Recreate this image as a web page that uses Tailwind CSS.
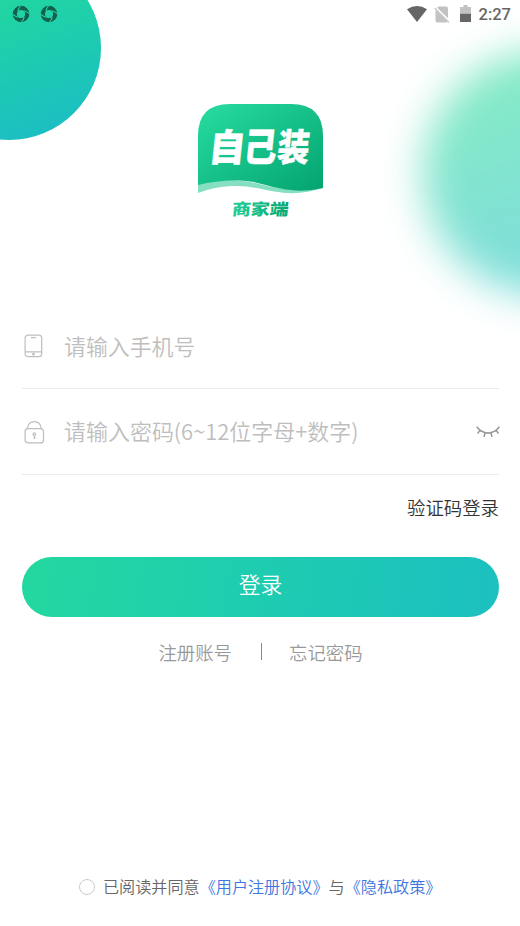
<!DOCTYPE html>
<html lang="zh-CN">
<head>
<meta charset="utf-8">
<meta name="viewport" content="width=device-width, initial-scale=1">
<title>登录</title>
<script src="https://cdn.jsdelivr.net/npm/@tailwindcss/browser@4"></script>
</head>
<body class="bg-white">
<main class="relative flex h-[926px] w-[520px] flex-col overflow-hidden bg-white font-['Noto_Sans_CJK_SC',sans-serif] font-[350]">
  <!-- decorative circles -->
  <div class="absolute -left-[83px] -top-[44px] size-[184px] rounded-full bg-linear-160 from-[#24dc96] from-15% to-[#1cbfc1] to-88%"></div>
  <div class="absolute left-[423px] top-[51px] size-[244px] rounded-full bg-linear-160 from-[#85ebc4] from-10% to-[#7eddda] to-80% blur-[20px]"></div>

  <header class="relative flex h-7 items-center pl-3 pr-[9px]">
    <div class="flex gap-[10px]">
      <svg class="size-[18px]" viewBox="0 0 18 18"><g id="swirl" fill="none"><circle cx="9" cy="9" r="6.200" stroke="#13604c" stroke-width="4.200"/><g stroke="#24d4a2" stroke-width="1.100"><path id="gap" d="M5.800 6.200Q6.500 3 8.800 .500"/><use href="#gap" transform="rotate(90 9 9)"/><use href="#gap" transform="rotate(180 9 9)"/><use href="#gap" transform="rotate(270 9 9)"/></g></g></svg>
      <svg class="size-[18px]" viewBox="0 0 18 18"><use href="#swirl"/></svg>
    </div>
    <div class="ml-auto flex items-center">
      <svg class="h-4 w-5" viewBox="0 0 20 16"><path fill="#666" d="M0 3.2Q10-3.1 20 3.2L10 16Z"/></svg>
      <svg class="ml-[7px] h-[17px] w-4" viewBox="0 0 16 17"><path fill="#c2c2c2" d="M4.500.500H12Q14 .500 14 2.500V12.200L3.100 1.700ZM1.500 3.700 13.200 15.600Q12.800 16.500 12 16.500H3.500Q1.500 16.500 1.500 14.500Z"/><path stroke="#c2c2c2" stroke-width="1.300" d="m.6 1.900 14.200 14.600"/></svg>
      <svg class="-mt-px ml-[10px] h-[17px] w-[11px]" viewBox="0 0 11 17"><path fill="#c2c2c2" d="M3.500 0h4v2H11v7H0V2h3.500Z"/><path fill="#666" d="M0 8.800h11V17H0Z"/></svg>
      <span class="ml-2 mt-0.5 font-[Roboto,sans-serif] text-[16.5px] font-medium leading-none text-[#666]">2:27</span>
    </div>
  </header>

  <!-- brand -->
  <div class="relative mx-auto mt-[76px] h-[116px] w-[125px]">
    <svg class="block h-full w-full overflow-visible" viewBox="0 0 125 116">
      <defs>
        <linearGradient id="tile" x1="0" y1="0" x2="1" y2="1"><stop offset="0" stop-color="#27dda2"/><stop offset="1" stop-color="#04a36f"/></linearGradient>
        <linearGradient id="word" x1="0" y1="0" x2="1" y2="0"><stop offset="0" stop-color="#20ce96"/><stop offset="1" stop-color="#08a875"/></linearGradient>
      </defs>
      <path fill="#85dfc0" d="M0 79Q20 75 46 77C66 80 84 87 104 86Q117 85 125 82V84Q107 90 90 89C69 88 56 81 34 82Q15 83 0 89Z"/>
      <path fill="url(#tile)" d="M0 32Q0 0 32 0H93Q125 0 125 32V84Q108 88 93 86C72 84 61 77 41 76.500Q19 76 0 81Z"/>
      <g font-family="Noto Sans CJK SC, sans-serif" font-size="37.500" font-weight="900" fill="#fff" stroke="#fff" stroke-width=".5">
        <text transform="translate(9.800 56.800) skewX(-6) scale(.970 1)">自</text>
        <text transform="translate(44.300 56.800) skewX(-6) scale(.890 1.040)">己</text>
        <text transform="translate(78.300 56.500) skewX(-6) scale(.850 1)">装</text>
      </g>
      <text transform="translate(33.500 111) skewX(-6) scale(1.180 1)" font-family="Noto Sans CJK SC, sans-serif" font-size="16" font-weight="900" fill="url(#word)">商家端</text>
    </svg>
  </div>

  <form class="relative ml-[22px] mr-[21px] mt-[83px] flex flex-col">
    <label class="flex h-[86px] items-center border-b border-[#ebebeb] text-[21.9px] text-[#bebebe]">
      <svg class="ml-0.5 h-[24px] w-[19px]" viewBox="0 0 19 24" fill="none" stroke="#bebebe" stroke-width="1.200"><rect x="1.100" y="1.100" width="16.600" height="21.600" rx="3"/><path d="M1 17.900h17M7 3.700h5"/><circle cx="9.500" cy="20.200" r=".8" fill="#bebebe"/></svg>
      <span class="ml-[21px] leading-8">请输入手机号</span>
    </label>
    <label class="flex h-[86px] items-center border-b border-[#ebebeb] text-[21.97px] text-[#bebebe]">
      <svg class="ml-0.5 h-[24px] w-[21px]" viewBox="0 0 21 24" fill="none" stroke="#bebebe" stroke-width="1.200"><rect x="1.100" y="8.700" width="18.400" height="14.200" rx="3"/><path d="M3.300 8.500C4 4 6.600 1.700 10.300 1.700S16.600 4 17.300 8.500M10.300 15.500V19M10.300 17.600h1.300"/><circle cx="10.300" cy="14.200" r="1.300"/></svg>
      <span class="-mt-0.5 ml-[19px] leading-8">请输入密码(6~12位字母+数字)</span>
      <svg class="-mr-px ml-auto h-3 w-6" viewBox="0 0 24 12" fill="none" stroke="#989898" stroke-width="1.500"><path d="M.8.800C6.500 9 17.500 9 23.400.800M4.300 4.300 1.500 7.500M9 6.700 8 11M15 6.700l1 4.300M19.800 4.300l2.800 3.200"/></svg>
    </label>
    <a class="mt-[18px] self-end text-[18.4px] leading-7 text-[#333]">验证码登录</a>
    <button type="button" class="mt-[36px] h-[60px] rounded-[30px] bg-linear-100 from-[#23d89f] to-[#1cc0c0] pb-1.5 text-[21.8px] text-white">登录</button>
    <div class="mt-[21px] flex items-center justify-center text-[18.4px] leading-7 text-[#999]">
      <a>注册账号</a><span class="-mt-0.5 ml-[29px] mr-[27px] h-[17px] w-px bg-[#888]"></span><a>忘记密码</a>
    </div>
  </form>

  <footer class="relative mb-[27px] ml-[79px] mt-auto flex items-center text-[16.12px] leading-[26px] text-[#666]">
    <span class="mr-2 size-4 rounded-full border border-[#ccc]"></span>
    <span class="-mt-0.5">已阅读并同意<a class="text-[#3d76df]">《用户注册协议》</a>与<a class="text-[#3d76df]">《隐私政策》</a></span>
  </footer>
</main>
</body>
</html>
